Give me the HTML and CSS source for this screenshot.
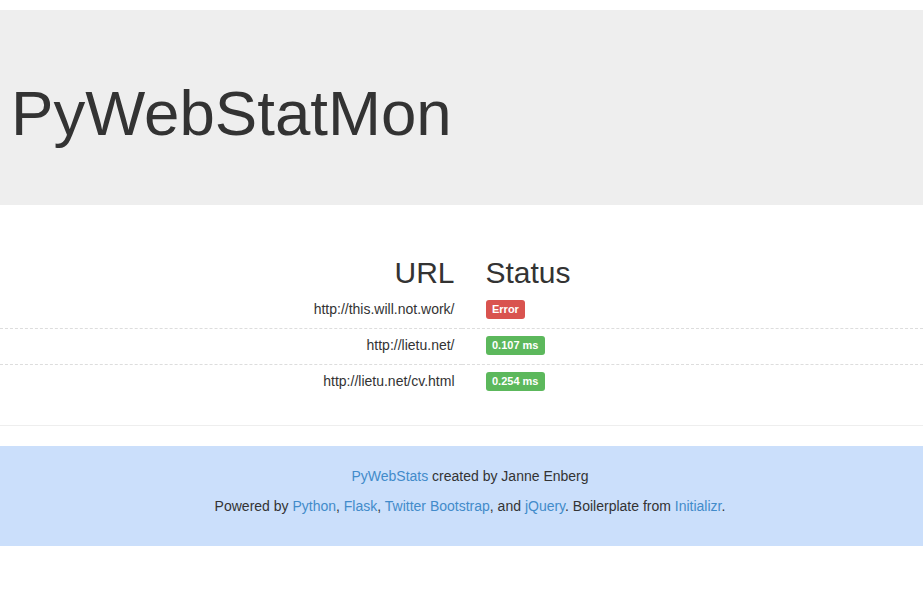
FILE: index.html
```html
<!DOCTYPE html>
<html lang="en">
<head>
<meta charset="utf-8">
<title>PyWebStatMon</title>
<link rel="stylesheet" href="styles.css">
</head>
<body>
<div class="page">
  <header class="jumbotron">
    <h1 class="title">PyWebStatMon</h1>
  </header>
  <main class="content">
    <table class="status-table">
      <thead>
        <tr>
          <th class="col-url">URL</th>
          <th class="col-status">Status</th>
        </tr>
      </thead>
      <tbody>
        <tr>
          <td class="col-url">http://this.will.not.work/</td>
          <td class="col-status"><span class="label label-error">Error</span></td>
        </tr>
        <tr>
          <td class="col-url">http://lietu.net/</td>
          <td class="col-status"><span class="label label-ok">0.107 ms</span></td>
        </tr>
        <tr>
          <td class="col-url">http://lietu.net/cv.html</td>
          <td class="col-status"><span class="label label-ok">0.254 ms</span></td>
        </tr>
      </tbody>
    </table>
    <hr class="divider">
  </main>
  <footer class="footer">
    <p><a href="#">PyWebStats</a> created by Janne Enberg</p>
    <p>Powered by <a href="#">Python</a>, <a href="#">Flask</a>, <a href="#">Twitter Bootstrap</a>, and <a href="#">jQuery</a>. Boilerplate from <a href="#">Initializr</a>.</p>
  </footer>
</div>
</body>
</html>
```

FILE: styles.css
```css
* {
  box-sizing: border-box;
}

html, body {
  margin: 0;
  padding: 0;
  background: #ffffff;
}

body {
  font-family: "Liberation Sans", Arial, sans-serif;
  font-size: 14px;
  line-height: 20px;
  color: #333333;
}

.page {
  padding-top: 10px;
}

.jumbotron {
  background: #eeeeee;
  padding: 48px 11px;
  margin-bottom: 30px;
}

.title {
  margin: 20px 0 10px;
  font-size: 63.6px;
  font-weight: normal;
  line-height: 69.3px;
  color: #333333;
}

.status-table {
  width: 100%;
  border-collapse: collapse;
  border-spacing: 0;
}

.status-table th {
  font-size: 30px;
  font-weight: normal;
  line-height: 33px;
  padding: 21px 0 4px;
}

.status-table td {
  padding: 6px 0 9px;
  line-height: 20px;
}

.status-table tbody tr + tr td {
  border-top: 1px dashed #dddddd;
}

.col-url {
  width: 50%;
  text-align: right;
  padding-right: 7px !important;
}

.col-status {
  width: 50%;
  text-align: left;
  padding-left: 24px !important;
}

.label {
  display: inline;
  font-size: 11px;
  font-weight: bold;
  line-height: 1;
  color: #ffffff;
  padding: 3px 6.5px 4px;
  border-radius: 3px;
  vertical-align: 1px;
  white-space: nowrap;
}

.label-error {
  background: #d9534f;
}

.label-ok {
  background: #5cb85c;
}

.divider {
  margin: 25px 0 20px;
  border: 0;
  border-top: 1px solid #eeeeee;
  height: 0;
}

.footer {
  background: #cbdffb;
  padding: 20px 0 20px 17px;
  text-align: center;
}

.footer p {
  margin: 0 0 10px;
}

.footer a {
  color: #428bca;
  text-decoration: none;
}
```
